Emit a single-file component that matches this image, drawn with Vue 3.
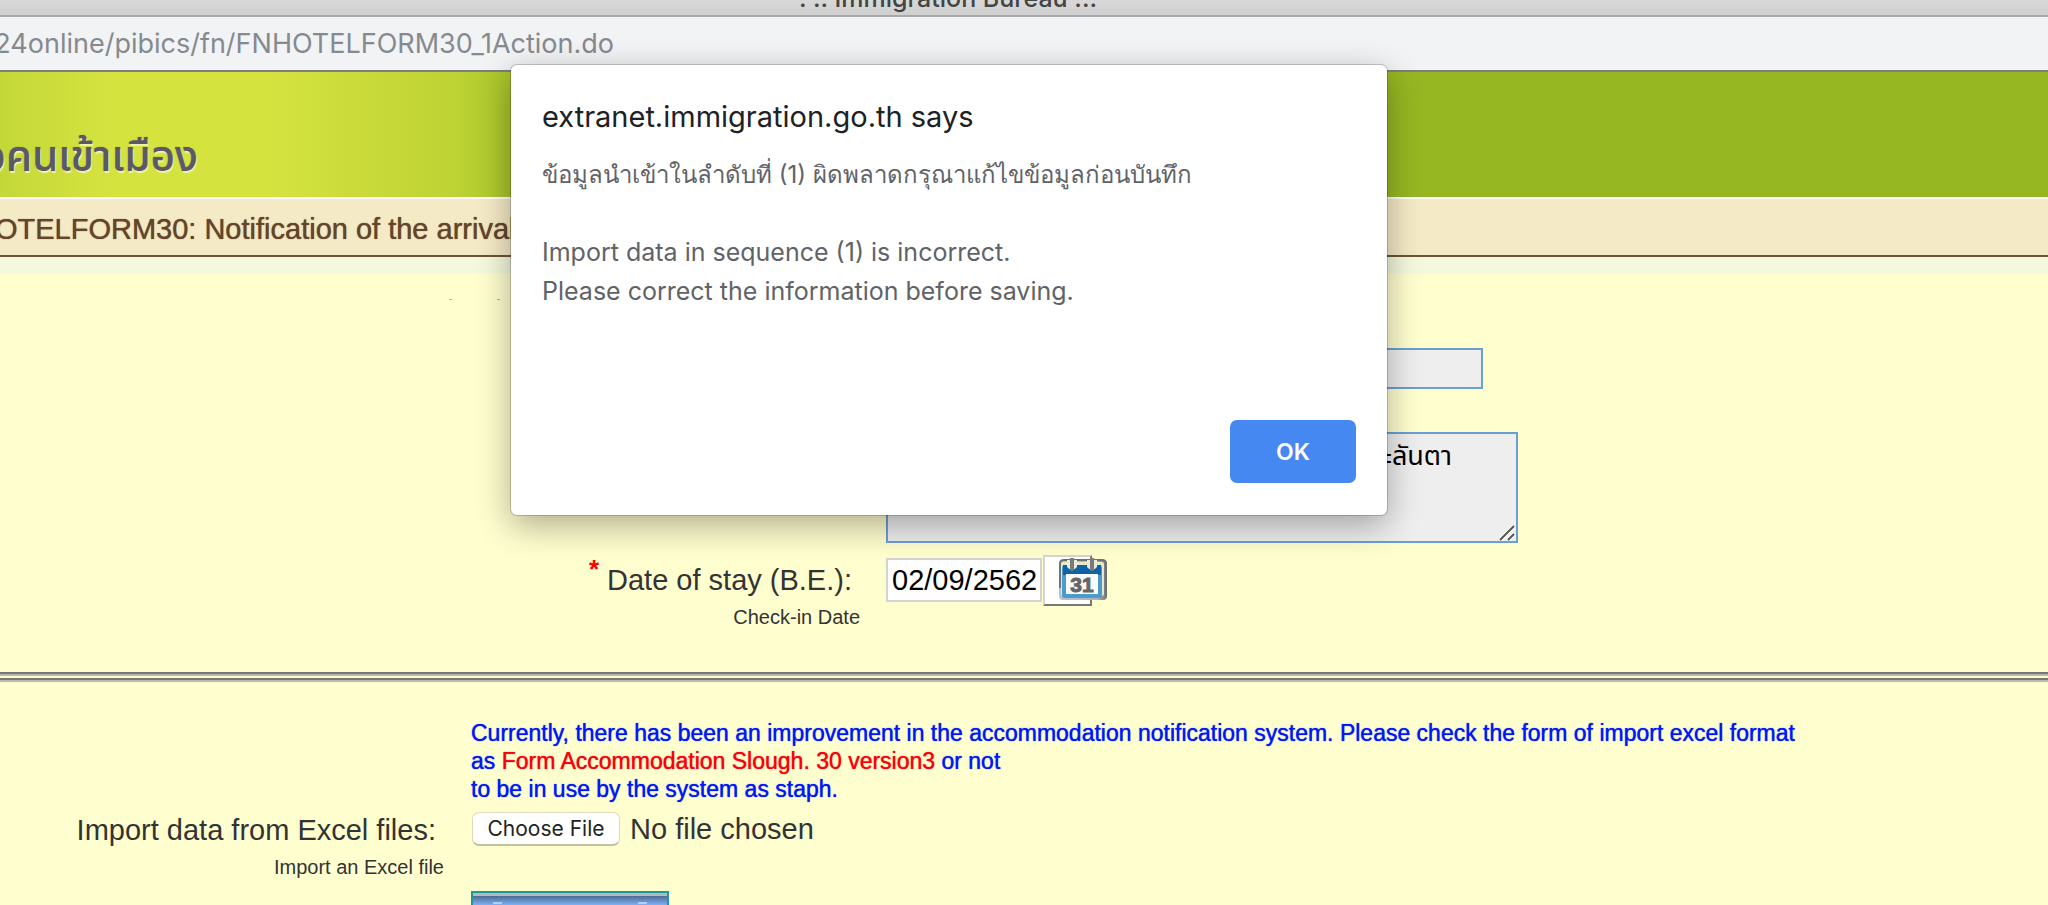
<script setup>
import { ref } from 'vue'

const stayDate = ref('02/09/2562')
const address = ref('เกาะลันตา')
</script>

<template>
  <div class="browser">
    <div class="tabbar"><span class="tab-title">. .. Immigration Bureau ...</span></div>
    <div class="urlbar"><span class="url">24online/pibics/fn/FNHOTELFORM30_1Action.do</span></div>

    <header class="banner"><span class="banner-name">วคนเข้าเมือง</span></header>
    <h1 class="crumb"><span>HOTELFORM30: Notification of the arrival</span></h1>
    <div class="strip"></div>

    <main class="page">
      <form class="details" @submit.prevent>
        <div class="specks"><i></i><i></i></div>
        <div class="row row-name">
          <div class="label"></div>
          <input class="box name" type="text" aria-label="Accommodation name" readonly />
        </div>
        <div class="row row-address">
          <label class="label address-label" for="address">Address</label>
          <div class="address-field">
            <textarea id="address" v-model="address" class="box address"></textarea>
            <svg class="grip" width="16" height="16" viewBox="0 0 16 16">
              <path d="M1 15L15 1M9 15l6-6" stroke="#fff" stroke-width="4" />
              <path d="M1 15L15 1M9 15l6-6" stroke="#555" stroke-width="2" />
            </svg>
          </div>
        </div>
        <div class="row row-date">
          <div class="label">
            <label class="main-label" for="stay"><sup class="star">*</sup>Date of stay (B.E.):</label>
            <small class="sub-label">Check-in Date</small>
          </div>
          <div class="date-field">
            <input id="stay" v-model="stayDate" class="date" type="text" />
            <button class="cal" type="button" aria-label="Choose date">
              <svg width="50" height="44" viewBox="0 0 50 44">
                <defs>
                  <linearGradient id="edge" x1="0" x2="1">
                    <stop offset="0" stop-color="#b9c3cb" />
                    <stop offset="0.8" stop-color="#aeb2b6" />
                    <stop offset="1" stop-color="#707376" />
                  </linearGradient>
                </defs>
                <rect x="1" y="2" width="48" height="40" rx="4" fill="url(#edge)" />
                <path d="M2 30V6q0-4 4-4h38q4 0 4 4v32" fill="none" stroke="#6d7275" stroke-width="2" />
                <rect x="3" y="4" width="43" height="34" rx="2" fill="#e6e8c8" />
                <rect x="4" y="7" width="40" height="33" rx="3" fill="#4b9bd0" />
                <rect x="5" y="7" width="38" height="10" fill="#0e62a5" />
                <rect x="8" y="16" width="32" height="20" fill="#fbfbfb" />
                <path d="M9 2v7q5 6 10 0v-7zM29 2v7q5 6 10 0v-7z" fill="#e8ecd8" />
                <path d="M14 1v10M34 1v10" stroke="#777b7c" stroke-width="4" stroke-linecap="round" />
                <text x="24" y="34" text-anchor="middle" class="cal-num">31</text>
              </svg>
            </button>
          </div>
        </div>
      </form>

      <hr class="rule" />

      <form class="import" @submit.prevent>
        <div class="import-label">
          <label class="main-label" for="excel">Import data from Excel files:</label>
          <small class="sub-label">Import an Excel file</small>
        </div>
        <div class="import-body">
          <p class="notice">
            Currently, there has been an improvement in the accommodation notification system. Please check the form of import excel format<br />
            as <em>Form Accommodation Slough. 30 version3</em> or not<br />
            to be in use by the system as staph.
          </p>
          <div class="file">
            <button id="excel" class="choose" type="button">Choose File</button>
            <span>No file chosen</span>
          </div>
          <button class="submit" type="submit" aria-label="Import"><i></i><i></i></button>
        </div>
      </form>
    </main>

    <div class="dialog" role="alertdialog" aria-labelledby="dlg-title">
      <h2 id="dlg-title">extranet.immigration.go.th says</h2>
      <p class="thai">ข้อมูลนำเข้าในลำดับที่ (1) ผิดพลาดกรุณาแก้ไขข้อมูลก่อนบันทึก</p>
      <p>&nbsp;</p>
      <p>Import data in sequence (1) is incorrect.</p>
      <p>Please correct the information before saving.</p>
      <div class="actions"><button class="ok" type="button">OK</button></div>
    </div>
  </div>
</template>

<style>
body {
  margin: 0;
}
</style>

<style scoped>
* {
  box-sizing: border-box;
}
.browser {
  position: relative;
  height: 100vh;
  overflow: hidden;
  display: flex;
  flex-direction: column;
  background: #fffecf;
  color: #333;
  font-family: "Liberation Sans", Arial, sans-serif;
}
.tabbar {
  height: 17px;
  flex: none;
  overflow: hidden;
  display: flex;
  justify-content: center;
  align-items: flex-end;
  background: linear-gradient(#d8d8d8, #cfcfcf);
  border-bottom: 2px solid #a9a9a9;
}
.tab-title {
  padding-right: 152px;
  font: 500 25px/34px Inter, sans-serif;
  color: #444;
}
.urlbar {
  height: 55px;
  flex: none;
  display: flex;
  background: #f1f3f5;
  border-bottom: 2px solid #7d7d82;
}
.url {
  width: 614px;
  display: flex;
  justify-content: flex-end;
  font: 27px/53px Inter, sans-serif;
  color: #868a8f;
  white-space: nowrap;
}
.banner {
  height: 127px;
  flex: none;
  border-bottom: 2px solid #fff;
  background: linear-gradient(90deg, #c3d838 0, #d5e33f 110px, #d5e33f 270px, #bdd233 460px, #a9c52b 510px, #96b722 700px);
}
.banner-name {
  display: flex;
  justify-content: flex-end;
  width: 198px;
  padding-top: 55px;
  font: 500 42px/60px "Liberation Sans", "Noto Sans Thai", sans-serif;
  color: #5c5866;
  text-shadow: 1px 2px 1px #eef2b0, 0 0 1px #5c5866;
  white-space: nowrap;
}
.crumb {
  height: 58px;
  flex: none;
  margin: 0;
  background: #f5eac6;
  border-bottom: 2px solid #6b5636;
  font-size: 29px;
  line-height: 60px;
  font-weight: 400;
  color: #64452a;
  text-shadow: 0 0 1px #64452a;
  white-space: nowrap;
}
.crumb span {
  margin-left: -26px;
}
.strip {
  height: 17px;
  flex: none;
  background: #f4f8dc;
}
.details {
  height: 398px;
  display: flex;
  flex-direction: column;
}
.specks {
  height: 74px;
  padding: 25px 0 0 449px;
  display: flex;
  gap: 45px;
}
.specks i {
  width: 3px;
  height: 1px;
  background: #b5b48f;
}
.row {
  display: grid;
  grid-template-columns: 860px 1fr;
  column-gap: 26px;
}
.box {
  margin: 0;
  border: 2px solid #6a9fd2;
  background: #eee;
  border-radius: 0;
  color: #000;
  font: 27px/36px "Liberation Sans", "Noto Sans Thai", sans-serif;
}
.row-name {
  height: 84px;
}
.name {
  width: 597px;
  height: 41px;
}
.row-address {
  height: 123px;
}
.address-field {
  position: relative;
  width: 632px;
  height: 111px;
}
.address {
  width: 100%;
  height: 100%;
  padding: 4px 64px 0 0;
  text-align: right;
  resize: none;
}
.grip {
  position: absolute;
  right: 3px;
  bottom: 2px;
}
.label {
  display: flex;
  flex-direction: column;
  align-items: flex-end;
}
.address-label {
  padding-top: 65px;
  font-size: 20px;
}
.main-label {
  padding-right: 8px;
  font-size: 29px;
  line-height: 50px;
  white-space: nowrap;
}
.sub-label {
  font-size: 20px;
  line-height: 24px;
}
.star {
  margin-right: 8px;
  color: #f00;
  font-size: 26px;
  font-weight: 700;
  line-height: 0;
  vertical-align: 12px;
}
.date-field {
  display: flex;
  align-items: center;
  height: 50px;
}
.date {
  width: 156px;
  height: 44px;
  margin: 0;
  padding: 0 4px;
  border: 2px solid #d3d3d3;
  background: #fff;
  color: #000;
  font: 29px "Liberation Sans", sans-serif;
}
.cal {
  width: 49px;
  height: 51px;
  margin-left: 1px;
  padding: 0 0 0 13px;
  border: 2px solid;
  border-color: #d5d5d5 #777 #777 #d5d5d5;
  background: #fff;
  line-height: 0;
}
.cal svg {
  display: block;
}
.cal-num {
  font: bold 21px "Liberation Sans", sans-serif;
  fill: #666;
  stroke: #666;
  stroke-width: 1px;
}
.rule {
  width: 100%;
  height: 10px;
  margin: 0;
  border: 0;
  background: linear-gradient(#777 0 2px, #b9b9b0 2px 4px, #fffecf 4px 6px, #777 6px 8px, #b9b9b0 8px);
}
.import {
  display: grid;
  grid-template-columns: 444px 1fr;
  column-gap: 27px;
  padding-top: 37px;
}
.import-label {
  display: flex;
  flex-direction: column;
  align-items: flex-end;
  padding-top: 86px;
}
.notice {
  margin: 0;
  font-size: 23px;
  line-height: 28px;
  color: #0018f9;
  text-shadow: 0 0 1px #0018f9;
}
.notice em {
  font-style: normal;
  color: #f9000f;
  text-shadow: 0 0 1px #f9000f;
}
.file {
  display: flex;
  align-items: center;
  gap: 10px;
  padding: 9px 0 0 1px;
  font-size: 29px;
  line-height: 34px;
}
.choose {
  width: 148px;
  height: 34px;
  padding: 0;
  border: 1px solid #dcdab8;
  border-bottom: 2px solid #c3c19e;
  border-radius: 7px;
  background: #fff;
  color: #222;
  font: 21px/32px Inter, sans-serif;
}
.submit {
  display: flex;
  justify-content: space-between;
  width: 198px;
  height: 48px;
  margin-top: 45px;
  padding: 9px 20px 0;
  border: 2px solid #1b9a9c;
  background: linear-gradient(#b8b8b8 0 3px, #4d6b92 3px, #7db0f5 12px);
}
.submit i {
  width: 9px;
  height: 2px;
  background: #b4cdf3;
}
.dialog {
  position: absolute;
  top: 65px;
  left: 511px;
  width: 876px;
  padding: 32px 31px;
  border-radius: 6px;
  background: #fff;
  box-shadow: 0 0 0 1px rgba(0, 0, 0, 0.18), 0 10px 34px rgba(0, 0, 0, 0.33);
  font-family: Inter, sans-serif;
}
.dialog h2 {
  margin: 0 0 18px;
  font-size: 29px;
  line-height: 40px;
  font-weight: 400;
  color: #202124;
}
.dialog p {
  margin: 0;
  font-size: 25px;
  line-height: 39px;
  color: #5f6368;
  white-space: nowrap;
}
.dialog .thai {
  font-size: 24px;
}
.actions {
  display: flex;
  justify-content: flex-end;
  padding-top: 109px;
}
.ok {
  width: 126px;
  height: 63px;
  border: 0;
  border-radius: 7px;
  background: #4688f1;
  color: #fff;
  font: 600 23px Inter, sans-serif;
}
</style>
